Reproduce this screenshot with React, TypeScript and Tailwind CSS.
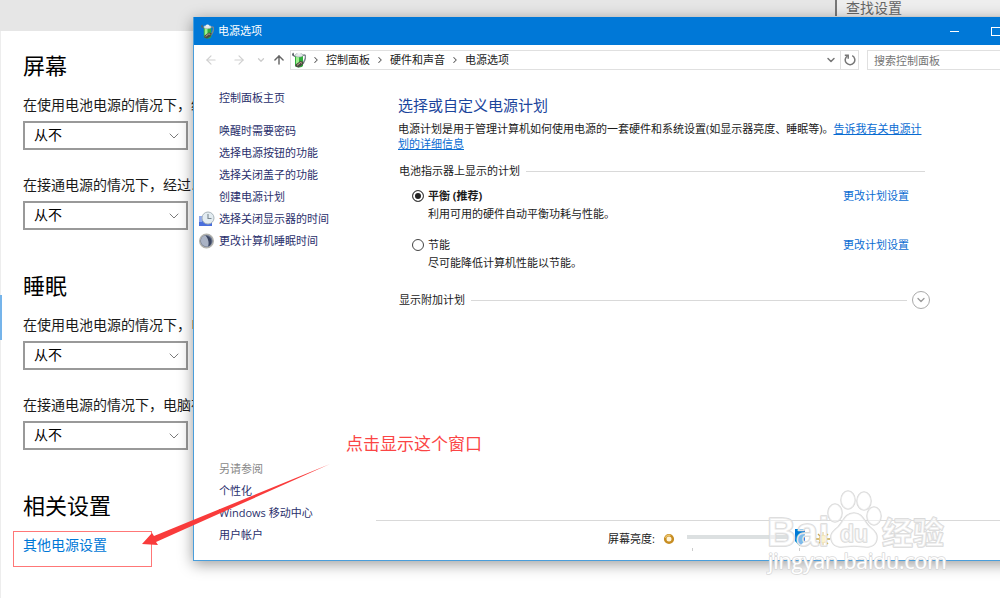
import React from "react";
import { ArrowLeft, ArrowRight, ArrowUp, ChevronDown, ChevronRight, X } from "lucide-react";

type SettingProps = {
  id: string;
  label: string;
};

const sections = [
  {
    title: "屏幕",
    settings: [
      { id: "screen-battery", label: "在使用电池电源的情况下，经" },
      { id: "screen-plugged", label: "在接通电源的情况下，经过以" },
    ],
  },
  {
    title: "睡眠",
    settings: [
      { id: "sleep-battery", label: "在使用电池电源的情况下，电" },
      { id: "sleep-plugged", label: "在接通电源的情况下，电脑在" },
    ],
  },
];

const crumbs = ["控制面板", "硬件和声音", "电源选项"];

const plans = [
  { id: "balanced", name: "平衡 (推荐)", text: "利用可用的硬件自动平衡功耗与性能。", active: true },
  { id: "saver", name: "节能", text: "尽可能降低计算机性能以节能。", active: false },
];

const BatteryIcon = ({ className }: { className?: string }) => (
  <svg viewBox="0 0 14 16" className={className} aria-hidden="true">
    <path d="M0 2.500 3 4.500M1 .8l.5 2.500" fill="none" stroke="#5a6268" strokeWidth="1.300" />
    <path d="M10.500 3.500c3-1.500 3.300.5 2.800 3S11.500 10 11 12" fill="none" stroke="#7c878d" strokeWidth="1.500" />
    <path d="M3 3.500v9.800c0 3 8 3 8 0V3.500z" fill="#2fae3c" />
    <path d="M4 4v10c1 .8 2 .8 3 .9V4z" fill="#9df08c" />
    <ellipse cx="7" cy="3.200" rx="4" ry="1.800" fill="#e3e8ea" stroke="#9aa5aa" strokeWidth=".6" />
    <ellipse cx="7" cy="1.500" rx="1.700" ry="1" fill="#f2f5f5" />
    <path d="m3.500 12.500 5-3.500 3 1-1 3-4 2.500-3-1z" fill="#4b4a44" />
    <path d="m5 13.300 3.500-2.800 1.500.8" fill="none" stroke="#c9b48d" strokeWidth="1" />
  </svg>
);

const ClockIcon = () => (
  <svg viewBox="0 0 16 16" className="h-4 w-4" aria-hidden="true">
    <path d="M0 5h13v10H0z" fill="#4a6fdc" />
    <path d="M0 5h3v6H0z" fill="#8ea8ee" />
    <circle cx="9" cy="7" r="6" fill="#e3ecf1" stroke="#a9b4ba" />
    <path d="M9 3v4.500h3.500" fill="none" stroke="#7c8991" strokeWidth="1.100" />
  </svg>
);

const MoonIcon = () => (
  <svg viewBox="0 0 16 16" className="h-4 w-4" aria-hidden="true">
    <circle cx="7.500" cy="8" r="6.800" fill="#6d7891" stroke="#b3b3ae" strokeWidth="1.400" />
    <path d="M6 2.500c4 .5 6.500 3 6.500 5.500s-1 4.500-3 5.500c1-4-.5-8-3.500-11z" fill="#3b4560" />
    <path d="M6.500 2.500C3 3 1.800 5.500 2 8.500s3.200 5 6.700 5c1.500-4 .5-8-2.200-11z" fill="#aab3c5" />
  </svg>
);

const RefreshIcon = () => (
  <svg viewBox="0 0 12 12" className="h-3 w-3" fill="none" stroke="currentColor" strokeWidth="1.500" aria-hidden="true">
    <path d="M8.200 1.600a4.800 4.800 0 1 1-4.700.2" />
    <path d="M.8 1.300h3.400v3.400" />
  </svg>
);

const Setting = ({ id, label }: SettingProps) => (
  <div className="mb-[25px]">
    <label htmlFor={id} className="block whitespace-nowrap text-sm text-[#1a1a1a]">
      {label}
    </label>
    <div className="relative mt-[6px] w-[165px]">
      <select
        id={id}
        className="block h-[29px] w-full appearance-none border-2 border-[#999] bg-white pb-[2px] pl-[9px] text-sm leading-5 text-black outline-none"
      >
        <option>从不</option>
      </select>
      <ChevronDown className="pointer-events-none absolute right-[6px] top-[7px] h-4 w-4 text-[#666]" strokeWidth={1.3} />
    </div>
  </div>
);

const SettingsPage = () => (
  <div className="flex min-h-screen flex-col bg-white">
    <header className="flex h-[31px] items-start justify-end bg-[#e6e6e6]">
      <input
        type="text"
        aria-label="查找设置"
        placeholder="查找设置"
        className="h-4 w-[165px] border-l-2 border-[#777] bg-[#eee] pl-[9px] text-sm leading-4 outline-none placeholder:text-[#666]"
      />
    </header>
    <div className="flex-1 border-l border-[#ededed] pl-[22px] pt-5">
      {sections.map((section) => (
        <section key={section.title} className="mb-4 flow-root">
          <h2 className="mb-4 text-[22px] leading-7 text-black">{section.title}</h2>
          {section.settings.map((setting) => (
            <Setting key={setting.id} {...setting} />
          ))}
        </section>
      ))}
      <section>
        <h2 className="mb-4 text-[22px] leading-7 text-black">相关设置</h2>
        <a href="#power" className="block w-fit text-sm text-[#0078d7]">
          其他电源设置
        </a>
      </section>
    </div>
  </div>
);

const TitleBar = () => (
  <div className="flex h-[28px] shrink-0 items-center bg-[#0078d7] pl-[7px] text-white">
    <BatteryIcon className="mr-1 h-[15px] w-[13px]" />
    <span className="flex-1">电源选项</span>
    <button aria-label="最小化" className="flex h-full w-[42px] items-center justify-center">
      <span className="h-px w-[9px] bg-white" />
    </button>
    <button aria-label="最大化" className="flex h-full w-[42px] items-center justify-center">
      <span className="h-[9px] w-[10px] border border-white" />
    </button>
    <button aria-label="关闭" className="flex h-full w-[42px] items-center justify-center">
      <X className="h-3 w-3" />
    </button>
  </div>
);

const AddressBar = () => (
  <div className="flex h-[30px] shrink-0 items-center pl-[10px] pr-[9px]">
    <button aria-label="后退" className="text-[#d0d0d0]">
      <ArrowLeft className="h-[14px] w-[14px]" strokeWidth={2} />
    </button>
    <button aria-label="前进" className="ml-[14px] text-[#d0d0d0]">
      <ArrowRight className="h-[14px] w-[14px]" strokeWidth={2} />
    </button>
    <button aria-label="最近" className="ml-[10px] text-[#ccc]">
      <ChevronDown className="h-[10px] w-[10px]" strokeWidth={3} />
    </button>
    <button aria-label="上移" className="ml-[6px] text-[#666]">
      <ArrowUp className="h-[14px] w-[14px]" strokeWidth={2.5} />
    </button>
    <div className="ml-1 flex h-5 flex-1 items-center border border-[#e0e0e0]">
      <BatteryIcon className="ml-px h-4 w-[14px]" />
      <nav className="flex flex-1 items-center">
        {crumbs.map((crumb) => (
          <React.Fragment key={crumb}>
            <ChevronRight className="mx-[5px] h-[10px] w-[10px] text-[#555]" strokeWidth={2.5} />
            <a href="#crumb" className="text-[#222]">
              {crumb}
            </a>
          </React.Fragment>
        ))}
      </nav>
      <button aria-label="历史记录" className="mr-[3px] text-[#777]">
        <ChevronDown className="h-3 w-3" strokeWidth={3} />
      </button>
      <button aria-label="刷新" className="flex h-full w-[18px] items-center justify-center border-l border-[#e0e0e0] text-[#777]">
        <RefreshIcon />
      </button>
    </div>
    <input
      type="text"
      aria-label="搜索控制面板"
      placeholder="搜索控制面板"
      className="ml-2 h-5 w-[183px] border border-[#e0e0e0] pl-[6px] outline-none placeholder:text-[#757575]"
    />
  </div>
);

const SideLink = ({ icon, children }: { icon?: React.ReactNode; children: React.ReactNode }) => (
  <a href="#task" className="flex h-[22px] items-center gap-1">
    <span className="w-4">{icon}</span>
    {children}
  </a>
);

const Sidebar = () => (
  <aside className="flex w-[182px] shrink-0 flex-col pb-[14px] pl-[5px] pt-3 text-[#2a2f6c]">
    <SideLink>控制面板主页</SideLink>
    <div className="mt-[11px]">
      <SideLink>唤醒时需要密码</SideLink>
      <SideLink>选择电源按钮的功能</SideLink>
      <SideLink>选择关闭盖子的功能</SideLink>
      <SideLink>创建电源计划</SideLink>
      <SideLink icon={<ClockIcon />}>选择关闭显示器的时间</SideLink>
      <SideLink icon={<MoonIcon />}>更改计算机睡眠时间</SideLink>
    </div>
    <div className="mt-auto">
      <p className="pl-5 leading-[22px] text-[#888]">另请参阅</p>
      <SideLink>个性化</SideLink>
      <SideLink>Windows 移动中心</SideLink>
      <SideLink>用户帐户</SideLink>
    </div>
  </aside>
);

const Brightness = () => (
  <div className="flex h-10 items-center border-t border-[#d9d9d9] pb-1 pl-[232px]">
    <label htmlFor="brightness">屏幕亮度:</label>
    <svg viewBox="0 0 12 12" className="ml-2 h-3 w-3" aria-hidden="true">
      <circle cx="6" cy="6" r="3.800" fill="#fff4d8" stroke="#c78d22" strokeWidth="2.600" />
      <path d="M2.500 5a3.800 3.800 0 0 1 5-2.500" fill="none" stroke="#eac36a" strokeWidth="1.300" />
    </svg>
    <div className="ml-3 mt-[2px] w-[118px]">
      <input
        id="brightness"
        type="range"
        min={0}
        max={100}
        defaultValue={100}
        className="block h-[18px] w-full appearance-none bg-transparent [&::-webkit-slider-runnable-track]:h-[4px] [&::-webkit-slider-runnable-track]:bg-[linear-gradient(90deg,#dce0e1_86%,transparent_86%)] [&::-webkit-slider-thumb]:-mt-[6px] [&::-webkit-slider-thumb]:h-[17px] [&::-webkit-slider-thumb]:w-[10px] [&::-webkit-slider-thumb]:appearance-none [&::-webkit-slider-thumb]:bg-[#0078d7] [&::-webkit-slider-thumb]:[clip-path:polygon(0_0,100%_0,100%_70%,50%_100%,0_70%)]"
      />
      <div className="mt-[2px] flex justify-between px-[5px]">
        <span className="h-[3px] w-px bg-[#ccc]" />
        <span className="h-[3px] w-px bg-[#ccc]" />
      </div>
    </div>
    <svg viewBox="0 0 14 14" className="ml-[11px] h-[14px] w-[14px]" aria-hidden="true">
      <path d="M7 0v14M0 7h14M2 2l10 10M12 2 2 12" stroke="#c9a955" strokeWidth="1.300" />
      <circle cx="7" cy="7" r="3.800" fill="#fbe69a" stroke="#e6c76f" />
    </svg>
  </div>
);

const PowerOptions = () => (
  <main className="flex min-w-0 flex-1 flex-col text-[#1a1a1a]">
    <div className="w-[554px] flex-1 pl-[22px] pt-5">
      <h1 className="text-[15px] leading-5 text-[#1c459c]">选择或自定义电源计划</h1>
      <p className="mt-[6px] leading-[15px]">
        电源计划是用于管理计算机如何使用电源的一套硬件和系统设置(如显示器亮度、睡眠等)。
        <a href="#more" className="text-[#0a6cd2] underline">
          告诉我有关电源计划的详细信息
        </a>
      </p>
      <fieldset className="mt-3">
        <legend className="flex w-full items-center pl-px pr-[5px]">
          电池指示器上显示的计划
          <span className="ml-[6px] h-px flex-1 bg-[#d9d9d9]" />
        </legend>
        <div className="flex flex-col gap-[13px] pt-2">
          {plans.map((plan) => (
            <div key={plan.id} className="pl-[14px] pr-[21px] leading-[18px]">
              <div className="flex items-center">
                <input
                  type="radio"
                  name="plan"
                  id={plan.id}
                  defaultChecked={plan.active}
                  className="m-0 h-3 w-3 appearance-none rounded-full border border-[#444] bg-white checked:bg-[#222] checked:shadow-[inset_0_0_0_2px_white]"
                />
                <label htmlFor={plan.id} className={plan.active ? "ml-1 flex-1 font-bold" : "ml-1 flex-1"}>
                  {plan.name}
                </label>
                <a href="#edit" className="text-[#0a6cd2]">
                  更改计划设置
                </a>
              </div>
              <p className="pl-4">{plan.text}</p>
            </div>
          ))}
        </div>
      </fieldset>
      <div className="mt-[19px] flex items-center pl-px">
        显示附加计划
        <span className="ml-[6px] mr-[5px] h-px flex-1 bg-[#d9d9d9]" />
        <button
          aria-label="显示附加计划"
          className="flex h-[18px] w-[18px] items-center justify-center rounded-full border border-[#aaa] text-[#999]"
        >
          <ChevronDown className="h-3 w-3" strokeWidth={2.5} />
        </button>
      </div>
    </div>
    <Brightness />
  </main>
);

const Watermark = () => (
  <svg viewBox="0 0 184 96" className="pointer-events-none absolute bottom-[16px] right-[50px] h-[96px] w-[184px]" aria-hidden="true">
    <g
      fill="#fff"
      fillOpacity=".5"
      stroke="#d9d9d9"
      strokeWidth="1.600"
      strokeLinejoin="round"
      paintOrder="stroke"
      className="font-['Liberation_Sans','Noto_Sans_CJK_SC',sans-serif]"
    >
      <text x="1" y="60" fontSize="40" fontWeight="700">
        Bai
      </text>
      <ellipse cx="69" cy="27" rx="7" ry="9" />
      <ellipse cx="82" cy="14" rx="7" ry="9" />
      <ellipse cx="98" cy="15" rx="7" ry="9" />
      <ellipse cx="108" cy="30" rx="7" ry="9" />
      <path d="M88 27c-9 0-11 9-16 14-6 5-9 8-6 15 4 8 14 4 22 4s18 4 22-4c3-7-1-11-6-15-6-5-7-14-16-14z" />
      <text x="74" y="56" fontSize="23" fontWeight="700">
        du
      </text>
      <text x="116" y="58" fontSize="31" fontWeight="700">
        经验
      </text>
      <text x="2" y="83" fontSize="21" fillOpacity="1" className="font-['Open_Sans',sans-serif]">
        jingyan.baidu.com
      </text>
    </g>
  </svg>
);

const App = () => {
  return (
    <div className="relative min-h-screen overflow-hidden font-['Open_Sans','Noto_Sans_CJK_SC',sans-serif]">
      <SettingsPage />
      <span className="absolute left-0 top-[295px] h-[45px] w-[2px] bg-[#75b4ea]" />

      <div className="absolute -right-[59px] bottom-[37px] left-[193px] top-[17px] flex flex-col border-b border-l border-[#4a9edb] bg-white text-[11px] leading-4 shadow-[0_3px_14px_rgba(0,0,0,0.4)]">
        <TitleBar />
        <AddressBar />
        <div className="flex min-h-0 flex-1">
          <Sidebar />
          <PowerOptions />
        </div>
      </div>

      {/* red callouts */}
      <span className="absolute left-[13px] top-[531px] h-[36px] w-[139px] border border-[#f77]" />
      <svg viewBox="0 0 190 84" className="pointer-events-none absolute left-[142px] top-[463px] h-[84px] w-[190px]" aria-hidden="true">
        <path d="M188 1 12 73 10 70 0 81 16 82 14 79z" fill="#f93b3b" />
      </svg>
      <p className="absolute left-[346px] top-[432px] text-[17px] leading-6 text-[#fb4545]">点击显示这个窗口</p>
      <Watermark />
    </div>
  );
};

export default App;
